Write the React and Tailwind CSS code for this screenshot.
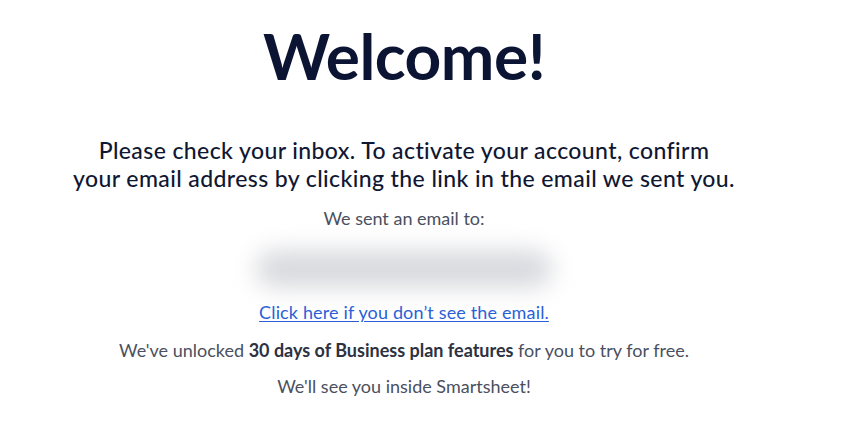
export default function App() {
  return (
    <div className="min-h-screen bg-white" style={{ fontFamily: "Lato, 'Open Sans', sans-serif" }}>
      <div className="w-[808px] flex flex-col items-center pt-[18px] text-center">
        <h1 className="text-[64px] leading-[76px] font-bold text-[#0b1433] tracking-[-0.5px]">Welcome!</h1>

        <p className="mt-[42px] text-[23px] leading-[28px] text-[#0f1733] font-medium tracking-[0.4px]">
          Please check your inbox. To activate your account, confirm
          <br />
          your email address by clicking the link in the email we sent you.
        </p>

        <p className="mt-[15px] text-[18px] leading-[22px] text-[#4a5060]">We sent an email to:</p>

        <div className="mt-[12px] h-[56px] w-[330px] flex items-center justify-center">
          <div className="h-[36px] w-[296px] rounded-full bg-[#d7d8dd] blur-[12px]"></div>
        </div>

        <a href="#" className="mt-[3px] text-[18px] leading-[24px] text-[#2a5fd8] underline underline-offset-2 tracking-[0.15px]">
          Click here if you don’t see the email.
        </a>

        <p className="mt-[14px] text-[18px] leading-[24px] text-[#4a5060]">
          We've unlocked <span className="font-bold text-[#2c3242]">30 days of Business plan features</span> for you to try for free.
        </p>

        <p className="mt-[12px] text-[18px] leading-[24px] text-[#4a5060]">We'll see you inside Smartsheet!</p>
      </div>
    </div>
  );
}
